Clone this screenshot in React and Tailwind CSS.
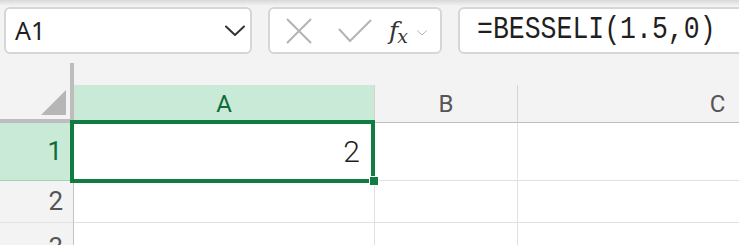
const Chevron = ({ className, stroke = '#333', width = 2 }) => (
    <svg viewBox="0 0 20 12" className={className} fill="none">
        <path d="M1 1.5 L10 10 L19 1.5" stroke={stroke} strokeWidth={width} strokeLinecap="round" strokeLinejoin="round" />
    </svg>
);

const App = () => {
    return (
        <div className="relative w-[739px] h-[245px] overflow-hidden bg-[#f3f3f3] font-['Roboto',sans-serif]">
            <div className="absolute top-0 left-0 right-0 h-[6px] bg-linear-to-b from-[#d8d8d8] to-[#f3f3f3]"></div>

            {/* barre de formule */}
            <div className="relative flex h-[63px] pl-[4px] pt-[7px]">
                <div className="flex shrink-0 items-center justify-between w-[248px] h-[47px] bg-white border-2 border-[#d6d6d6] rounded-[6px] pl-[9px] pr-[5px]">
                    <span className="text-[25px] text-[#1f1f1f] font-['Noto_Sans',sans-serif] leading-none">A1</span>
                    <Chevron className="w-[20px] h-[12px]" />
                </div>
                <div className="flex shrink-0 items-center ml-[16px] w-[174px] h-[47px] bg-white border-2 border-[#d6d6d6] rounded-[6px]">
                    <svg viewBox="0 0 26 26" className="ml-[16px] w-[26px] h-[26px]" fill="none">
                        <path d="M1 1 L25 25 M25 1 L1 25" stroke="#b4b4b4" strokeWidth="2" />
                    </svg>
                    <svg viewBox="0 0 34 24" className="ml-[26px] w-[34px] h-[24px]" fill="none">
                        <path d="M1 10 L12 22 L33 1" stroke="#b4b4b4" strokeWidth="2" />
                    </svg>
                    <span className="ml-[17px] flex items-end text-[#333] font-['DejaVu_Serif',serif] leading-none">
                        <span className="italic text-[25px]">f</span>
                        <span className="italic text-[19px] -ml-[1px] translate-y-[3px]">x</span>
                    </span>
                    <Chevron className="ml-[9px] mt-[4px] w-[10px] h-[6px]" stroke="#b4b4b4" width={2} />
                </div>
                <div className="flex shrink-0 items-center ml-[16px] w-[320px] h-[47px] bg-white border-2 border-[#d6d6d6] rounded-[6px] pl-[17px]">
                    <span className="text-[26.5px] text-[#1f1f1f] font-['Liberation_Mono',monospace] leading-none scale-y-[1.18]">=BESSELI(1.5,0)</span>
                </div>
            </div>

            {/* grille */}
            <div className="relative">
                <div className="flex h-[60px]">
                    <div className="relative w-[74px] border-r-4 border-b-4 border-[#bdbdbd] shrink-0">
                        <svg viewBox="0 0 25 25" className="absolute right-[4px] bottom-[4px] w-[25px] h-[25px]">
                            <path d="M25 0 L25 25 L0 25 Z" fill="#b6b6b6" />
                        </svg>
                    </div>
                    <div className="flex flex-1 items-end">
                        <div className="flex shrink-0 items-center justify-center w-[300px] h-[38px] bg-[#caead8] border-b border-[#bdbdbd] text-[24px] text-[#0f6b39]">A</div>
                        <div className="flex shrink-0 items-center justify-center w-[143px] h-[38px] border-l border-b border-[#d4d4d4] border-b-[#bdbdbd] text-[24px] text-[#555]">B</div>
                        <div className="flex shrink-0 items-center justify-center w-[330px] h-[38px] border-l border-b border-[#d4d4d4] border-b-[#bdbdbd] text-[24px] text-[#555] pl-[70px]">C</div>
                    </div>
                </div>

                <div className="flex h-[58px]">
                    <div className="flex items-center justify-end w-[74px] pr-[11px] bg-[#caead8] border-r border-b border-r-[#c2c2c2] border-b-[#9fd6b6] text-[26px] text-[#0f6b39] shrink-0">1</div>
                    <div className="flex shrink-0 items-center justify-end w-[300px] bg-white border-b border-[#e0e0e0] pr-[14px] text-[30px] font-light text-[#1f1f1f]">2</div>
                    <div className="w-[143px] shrink-0 bg-white border-l border-b border-[#e0e0e0]"></div>
                    <div className="flex-1 bg-white border-l border-b border-[#e0e0e0]"></div>
                </div>

                <div className="flex h-[42px]">
                    <div className="flex items-center justify-end w-[74px] pr-[10px] bg-[#f3f3f3] border-r border-b border-r-[#c2c2c2] border-b-[#e0e0e0] text-[26px] text-[#555] shrink-0">2</div>
                    <div className="w-[300px] shrink-0 bg-white border-b border-[#e0e0e0]"></div>
                    <div className="w-[143px] shrink-0 bg-white border-l border-b border-[#e0e0e0]"></div>
                    <div className="flex-1 bg-white border-l border-b border-[#e0e0e0]"></div>
                </div>

                <div className="flex h-[42px]">
                    <div className="flex items-start justify-end w-[74px] pr-[10px] pt-[5px] bg-[#f3f3f3] border-r border-r-[#c2c2c2] text-[26px] text-[#555] shrink-0">3</div>
                    <div className="w-[300px] shrink-0 bg-white"></div>
                    <div className="w-[143px] shrink-0 bg-white border-l border-[#e0e0e0]"></div>
                    <div className="flex-1 bg-white border-l border-[#e0e0e0]"></div>
                </div>

                {/* sélection A1 */}
                <div className="absolute left-[70px] top-[57px] w-[305px] h-[63px] border-4 border-[#107c41]"></div>
                <div className="absolute left-[369px] top-[113px] w-[10px] h-[10px] bg-[#107c41] border border-white"></div>
            </div>
        </div>
    );
}
export default App;
